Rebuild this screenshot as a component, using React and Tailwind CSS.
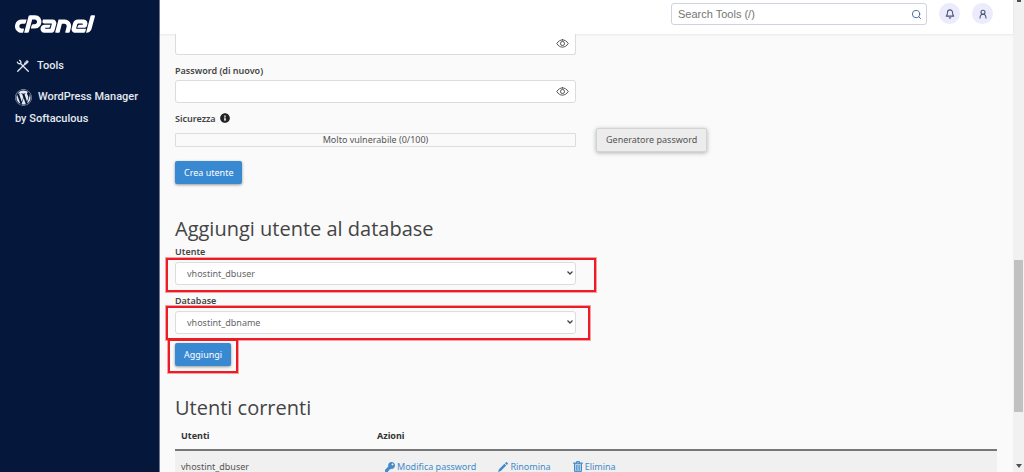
import React from "react";
import { SiCpanel } from "react-icons/si";
import { FaWordpress, FaInfoCircle, FaKey } from "react-icons/fa";
import { IoEyeOutline } from "react-icons/io5";
import { FiSearch, FiBell } from "react-icons/fi";

function Highlight({ className }) {
  return (
    <span
      aria-hidden="true"
      className={`pointer-events-none absolute border-2 border-[#ed1c24] ring-1 ring-[#ed1c24]/40 ${className}`}
    />
  );
}

function ToolsIcon() {
  return (
    <svg viewBox="0 0 14 14" className="size-3.5" fill="none" stroke="currentColor" strokeWidth="1.3" strokeLinecap="round">
      <path d="M4.500 4.500 12.300 12.300" />
      <path d="M1.400 3.200c.6 1.400 2.200 1.900 3.100 1.300.8-.9.5-2.300-.9-3.100" />
      <path d="M1.700 12.300 8.500 5.500" />
      <path d="M8.500 4.200v1.300h1.300l2.700-2.600-1.300-1.400z" fill="currentColor" strokeWidth=".6" />
    </svg>
  );
}

function PencilIcon() {
  return (
    <svg viewBox="0 0 10 10" className="size-2.5" fill="currentColor">
      <path d="M0 10 1 7.200 6.400 1.800 8.200 3.600 2.800 9zM7 1.200 8 .3q.5-.5 1 0l.7.7q.5.500 0 1L8.800 3z" />
    </svg>
  );
}

function TrashIcon() {
  return (
    <svg viewBox="0 0 10 11" className="h-[11px] w-2.5" fill="none" stroke="currentColor" strokeWidth="1">
      <path d="M1.500 3v7.400h7V3" fill="currentColor" fillOpacity=".35" />
      <path d="M3.500 2V.6h3V2M3.800 4v5.500M6.200 4v5.500" />
      <path d="M.2 2.200h9.600" strokeWidth="1.400" />
    </svg>
  );
}

function Sidebar() {
  return (
    <aside className="w-40 shrink-0 border-r border-[#6d7791] bg-[#05183b] pl-[15px] pt-3 font-['Roboto',sans-serif] text-[11px] font-medium text-[#e4e8f0]">
      <a href="#home" aria-label="cPanel" className="flex h-6 w-20 items-center overflow-hidden text-white">
        <SiCpanel className="size-20 shrink-0" />
      </a>
      <nav className="mt-5">
        <a href="#tools" className="flex h-5 items-center gap-[7px] pl-px">
          <ToolsIcon />
          Tools
        </a>
        <a href="#wordpress" className="mt-2.5 block leading-[22px]">
          <FaWordpress className="mr-1.5 inline size-[17px]" />
          WordPress Manager
          <br />
          by Softaculous
        </a>
      </nav>
    </aside>
  );
}

function Header() {
  return (
    <header className="relative flex h-[34px] shrink-0 items-start justify-end gap-3 bg-white pr-5 pt-[3px] shadow-[0_1px_2px_rgba(0,0,0,0.08)]">
      <div className="flex h-[22px] w-64 items-center rounded-[3px] border border-[#cfd2df] bg-white pl-1.5 pr-1">
        <input
          type="search"
          aria-label="Search Tools"
          placeholder="Search Tools (/)"
          className="min-w-0 flex-1 bg-transparent font-['Liberation_Sans',sans-serif] text-[11px] outline-none placeholder:text-[#757575]"
        />
        <FiSearch className="size-[11px] text-[#3f629b]" />
      </div>
      <button aria-label="Notifiche" className="flex size-[21px] items-center justify-center rounded-full bg-[#ebebfc] text-[#4b5678]">
        <FiBell className="size-2.5" strokeWidth={2.6} />
      </button>
      <button aria-label="Account" className="flex size-[21px] items-center justify-center rounded-full bg-[#ebebfc] text-[#4b5678]">
        <svg viewBox="0 0 10 10" className="size-2.5" fill="none" stroke="currentColor" strokeWidth="1.1" strokeLinecap="round">
          <circle cx="5" cy="3.2" r="2" />
          <path d="M2 9c.1-2.300 1.200-3.700 3-3.700S7.900 6.700 8 9" />
        </svg>
      </button>
    </header>
  );
}

function SelectField({ id, label, value, children }) {
  return (
    <div>
      <label htmlFor={id} className="block h-[19px] pt-[3px] font-semibold leading-[14px] text-[#444]">
        {label}
      </label>
      <div className="relative mt-px">
        <select id={id} className="block h-[23px] w-full appearance-none rounded-[3px] border border-[#dcdcdc] bg-white pl-[11px] text-[#666]">
          <option>{value}</option>
        </select>
        <svg viewBox="0 0 8 6" className="pointer-events-none absolute right-0.5 top-2 h-1.5 w-2" fill="none" stroke="#444" strokeWidth="1.3">
          <path d="M1.500 1.500 4 4l2.500-2.500" />
        </svg>
        {children}
      </div>
    </div>
  );
}

const primary = "h-[23px] rounded-[2px] bg-[#3889d1] px-[9px] text-white shadow-[0_1px_3px_rgba(0,0,0,0.4)]";
const heading = "font-['Open_Sans',sans-serif] text-xl font-normal leading-7 text-[#444]";

function Content() {
  return (
    <main className="min-h-0 flex-1 overflow-hidden bg-[#fafafa] pl-[15px] pr-4 text-[9px] text-[#555]">
      <div className="relative w-[401px]">
        <input type="password" aria-label="Password" className="block h-[21px] w-full rounded-b-[3px] border border-t-0 border-[#dcdcdc] bg-white pl-2" />
        <button aria-label="Mostra password" className="absolute right-[7px] top-[3px] text-[#333]">
          <IoEyeOutline className="size-[13px]" />
        </button>
      </div>
      <label htmlFor="pw2" className="block h-[25px] pt-2 font-semibold leading-4 text-[#444]">
        Password (di nuovo)
      </label>
      <div className="relative w-[401px]">
        <input id="pw2" type="password" className="block h-[23px] w-full rounded-[3px] border border-[#dcdcdc] bg-white pl-2" />
        <button aria-label="Mostra password (di nuovo)" className="absolute right-[7px] top-[5px] text-[#333]">
          <IoEyeOutline className="size-[13px]" />
        </button>
      </div>
      <div className="flex h-6 items-end gap-1 font-semibold leading-4 text-[#444]">
        Sicurezza
        <FaInfoCircle className="mb-1 size-2.5 text-[#222]" />
      </div>
      <div className="mt-px flex h-6 items-center gap-5">
        <div className="flex h-3.5 w-[401px] items-center justify-center rounded-[1px] border border-[#dcdcdc]">
          Molto vulnerabile (0/100)
        </div>
        <button className="h-6 rounded-[2px] border border-[#d4d4d4] bg-[#ececec] px-[9px] shadow-[0_1px_4px_rgba(0,0,0,0.3)]">
          Generatore password
        </button>
      </div>
      <button className={`mt-[9px] block ${primary}`}>Crea utente</button>

      <section className="mt-[31px]">
        <h2 className={heading}>Aggiungi utente al database</h2>
        <div className="-mt-px flex w-[401px] flex-col gap-1.5">
          <SelectField id="user" label="Utente" value="vhostint_dbuser">
            <Highlight className="-left-[9px] -right-[20px] -top-[4px] h-[34px]" />
          </SelectField>
          <SelectField id="db" label="Database" value="vhostint_dbname">
            <Highlight className="-left-[9px] -right-[14px] -top-[5px] h-[34px]" />
          </SelectField>
        </div>
        <div className="relative mt-[9px] w-fit">
          <button className={`block ${primary}`}>Aggiungi</button>
          <Highlight className="-bottom-[7px] -left-[7px] -right-[7px] -top-1" />
        </div>
      </section>

      <section className="mt-7">
        <h2 className={heading}>Utenti correnti</h2>
        <table className="mt-px w-full table-fixed border-collapse text-left">
          <thead>
            <tr className="h-[27px] border-b-2 border-[#777] text-[#333]">
              <th className="w-[196px] pl-1.5 font-bold">Utenti</th>
              <th className="pl-1.5 font-bold">Azioni</th>
            </tr>
          </thead>
          <tbody>
            <tr className="h-8 bg-[#f0f0f0]">
              <td className="pl-1.5">vhostint_dbuser</td>
              <td className="pl-3.5">
                <div className="flex items-center gap-[22px] text-[#428bca]">
                  <a href="#password" className="flex items-center gap-0.5"><FaKey className="size-2.5" />Modifica password</a>
                  <a href="#rename" className="flex items-center gap-0.5"><PencilIcon />Rinomina</a>
                  <a href="#delete" className="flex items-center gap-0.5"><TrashIcon />Elimina</a>
                </div>
              </td>
            </tr>
          </tbody>
        </table>
      </section>
    </main>
  );
}

function ScrollTrack() {
  return (
    <div aria-hidden="true" className="flex w-[11px] shrink-0 flex-col items-center bg-[#f1f1f1]">
      <div className="h-0.5 w-1 bg-[#505050]" />
      <div className="flex-[258]" />
      <div className="w-[9px] flex-[152] bg-[#c1c1c1]" />
      <div className="flex-[52]" />
      <svg viewBox="0 0 6 4" className="mb-1 h-1 w-1.5" fill="#505050">
        <path d="M0 0h6L3 4z" />
      </svg>
    </div>
  );
}

export default function App() {
  return (
    <div className="flex h-screen overflow-hidden font-['Noto_Sans',sans-serif]">
      <Sidebar />
      <div className="flex min-w-0 flex-1 flex-col">
        <Header />
        <Content />
      </div>
      <ScrollTrack />
    </div>
  );
}
